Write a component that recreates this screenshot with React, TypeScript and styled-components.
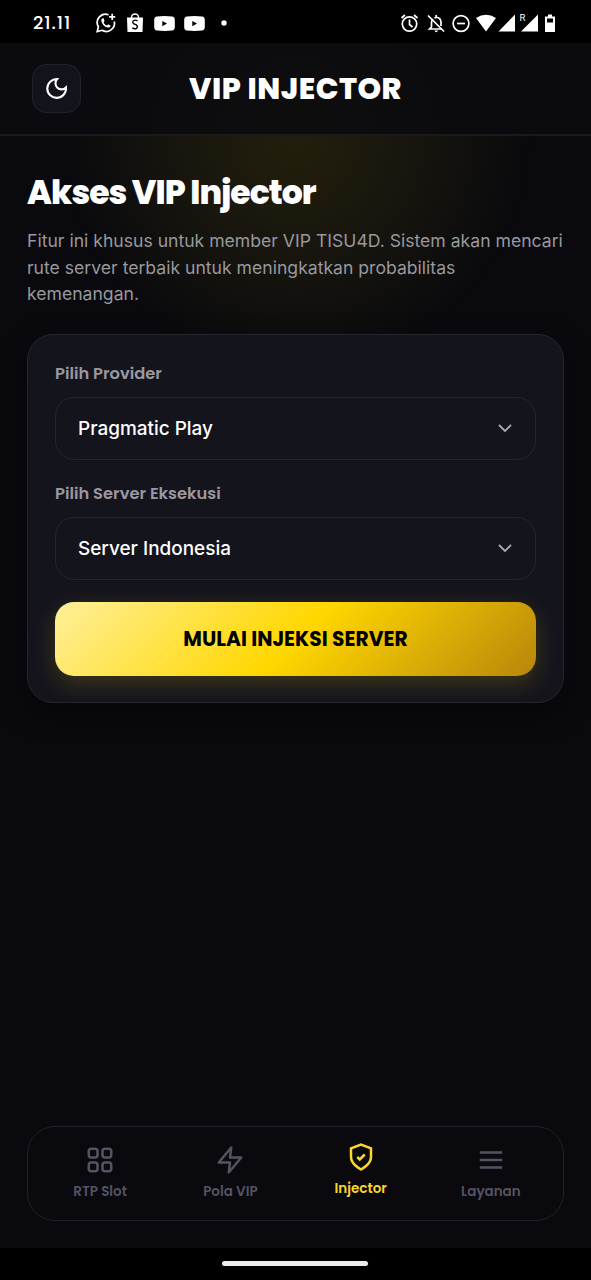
import React from 'react';
import styled, { createGlobalStyle, css } from 'styled-components';

const display = "'Poppins', 'Inter', 'Liberation Sans', sans-serif";

const GlobalStyle = createGlobalStyle`
  * { box-sizing: border-box; }
  body {
    margin: 0;
    background: #09090e;
    color: #fff;
    font-family: 'Inter', 'Liberation Sans', sans-serif;
  }
`;

const Screen = styled.div`
  width: 591px;
  height: 1280px;
  display: flex;
  flex-direction: column;
  overflow: hidden;
  background: radial-gradient(circle 236px at 295px 137px, #231f0c 0%, #1c190d 32%, #12110d 68%, #09090e 100%) #09090e;
`;

const StatusBar = styled.div`
  height: 43px;
  flex: none;
  display: flex;
  align-items: center;
  justify-content: space-between;
  padding: 3px 35px 0 33px;
  background: #000;
`;

const StatusGroup = styled.div`
  display: flex;
  align-items: center;
  gap: 9px;
`;

const Clock = styled.span`
  width: 54px;
  font: 500 18px/20px ${display};
  letter-spacing: 0.9px;
`;

const Header = styled.header`
  height: 93px;
  flex: none;
  display: grid;
  grid-template-columns: 49px 1fr 49px;
  align-items: center;
  padding: 0 32px;
  background: rgba(10, 10, 15, 0.86);
  border-bottom: 2px solid #1a1a1e;
`;

const ThemeButton = styled.button`
  width: 49px;
  height: 49px;
  display: grid;
  place-items: center;
  padding: 0;
  color: #fff;
  background: #13131c;
  border: 1px solid #22222a;
  border-radius: 14px;
`;

const Brand = styled.div`
  text-align: center;
  font: 800 30px/40px ${display};
  letter-spacing: 0.5px;
  white-space: nowrap;
`;

const Main = styled.main`
  flex: 1;
  padding: 35px 27px 0;
`;

const Title = styled.h1`
  margin: 0;
  font: 800 33px/44px ${display};
  letter-spacing: -0.93px;
`;

const Intro = styled.p`
  margin: 13px 0 0;
  font-size: 17.6px;
  line-height: 26.6px;
  color: #98989d;
  white-space: nowrap;
`;

const Card = styled.section`
  height: 369px;
  margin-top: 26px;
  padding: 26px 27px;
  background: #14141d;
  border: 1px solid #25252d;
  border-radius: 26px;
  box-shadow: 0 10px 30px rgba(0, 0, 0, 0.3);
`;

const Field = styled.div`
  display: flex;
  flex-direction: column;
  gap: 11px;
  margin-bottom: 21px;

  &:last-of-type {
    margin-bottom: 22px;
  }
`;

const Label = styled.label`
  font: 600 16.3px/25px ${display};
  color: #9998a1;
`;

const Select = styled.div`
  height: 63px;
  display: flex;
  align-items: center;
  justify-content: space-between;
  padding: 0 22px;
  font-size: 18.95px;
  font-weight: 500;
  border: 1px solid #25252d;
  border-radius: 19px;
`;

const Submit = styled.button`
  display: block;
  width: 100%;
  height: 74px;
  padding: 0;
  border: 0;
  border-radius: 19px;
  color: #000;
  font: 700 20.3px/30px ${display};
  background: linear-gradient(135deg, #fff09a 0%, #ffd700 50%, #b8860b 100%);
  box-shadow: 0 8px 24px rgba(255, 215, 0, 0.18);
`;

const Nav = styled.nav`
  height: 95px;
  flex: none;
  display: grid;
  grid-template-columns: repeat(4, 1fr);
  margin: 0 27px 27px;
  padding: 0 7px;
  border: 1px solid #212127;
  border-radius: 28px;
`;

const NavItem = styled.div<{ $active?: boolean }>`
  display: flex;
  flex-direction: column;
  align-items: center;
  gap: 7px;
  padding-top: 18px;
  color: #555361;
  font: 600 13.5px/20px ${display};
  ${(p) =>
    p.$active &&
    css`
      padding-top: 15px;
      color: #fbd72b;
    `}
`;

const GestureBar = styled.div`
  height: 32px;
  flex: none;
  display: grid;
  place-items: center;
  padding: 0 1px 1px 0;
  background: #000;
`;

const Handle = styled.div`
  width: 146px;
  height: 5px;
  border-radius: 3px;
  background: #ececec;
`;

const Glyph = ({ size = 30, children }: { size?: number; children: React.ReactNode }) => (
  <svg width={size} height={size} viewBox="0 0 24 24" fill="none" stroke="currentColor" strokeWidth={2}>
    {children}
  </svg>
);

const Chevron = () => (
  <svg width="16" height="10" viewBox="0 0 16 10" fill="none" stroke="#aaaab2" strokeWidth="1.8">
    <path d="M2 2l6 6 6-6" />
  </svg>
);

const YouTube = () => (
  <svg width="21" height="15" viewBox="0 0 21 15">
    <path
      fill="#fff"
      fillRule="evenodd"
      d="M3 .5Q10.5-.4 18 .5Q20.7.8 20.8 4V11Q20.7 14.2 18 14.5Q10.500 15.4 3 14.5Q.3 14.2.2 11V4Q.3.8 3 .5ZM8.300 5V10.200L13 7.600Z"
    />
  </svg>
);

export default function App() {
  return (
    <>
      <GlobalStyle />
      <Screen>
        <StatusBar>
          <StatusGroup>
            <Clock>21.11</Clock>
            <svg width="20" height="20" viewBox="0 0 20 20" fill="none" stroke="#fff" strokeWidth="1.7">
              <path d="M12.500 1.700A8.300 8.300 0 0 0 2.400 13.700L1.200 18.600L6 17.300A8.300 8.300 0 0 0 18.300 8.500" />
              <path d="M16.200.8V7M13.100 3.900H19.300" />
              <path
                fill="#fff"
                stroke="none"
                d="M6.500 5.200Q5 6.100 5.300 7.900Q6.500 13 11.700 14.500Q14 14.800 14.700 12.700L12.200 11.300L10.900 12.600Q8.600 11.700 7.600 9.400L8.500 7.900L7.600 5.300Z"
              />
            </svg>
            <svg width="20" height="20" viewBox="0 0 20 20">
              <path d="M6.500 5V4Q7 1 10 1T13.500 4V5" fill="none" stroke="#fff" strokeWidth="1.3" />
              <path d="M2 4.500H18L17.500 19H2.500Z" fill="#fff" />
              <path
                d="M12.500 7.800Q10.500 6.600 8.800 7.500Q6.900 9 8.500 10.600L11.300 11.900Q13.300 13.400 11.600 15.300Q9.700 16.500 7.300 14.900"
                fill="none"
                stroke="#000"
                strokeWidth="1.4"
              />
            </svg>
            <YouTube />
            <YouTube />
            <svg width="29" height="6" viewBox="0 0 29 6">
              <circle cx="10" cy="3" r="2.7" fill="#fff" />
            </svg>
          </StatusGroup>
          <svg width="156" height="20" viewBox="0 0 156 20" fill="none" stroke="#fff" strokeWidth="1.7">
            <circle cx="9.500" cy="11" r="7.200" />
            <path d="M9.500 6.500V11.500L12.500 14M1.500 5L5 2M14 2L17.500 5" />
            <path d="M32.500 16H42M32.500 16H29.500L31.500 14V9.500Q31.500 7.500 33 6M34.500 5Q36 4 37.500 4.500Q41 5.500 41 9.500V13M36.200 2V4.500" />
            <path d="M28 2.500L44 18.500" />
            <path d="M34.500 17.500H38Q37.500 19.300 36.200 19.300T34.500 17.500Z" fill="#fff" stroke="none" />
            <circle cx="61" cy="10.500" r="7.900" />
            <path d="M57 10.500H65" />
            <path
              fill="#fff"
              stroke="none"
              d="M76 5Q86 -1.500 96 5L86 18.500ZM115 1.500V18.500H98.500ZM138 1.500V18.500H121V18.500ZM148 1.500H152V3.500H155V19H145V3.500H148Z"
            />
            <path fill="#000" stroke="none" d="M119 0H127V10H119ZM147 5.500H153V9.500H147Z" />
            <text x="119.500" y="8" fill="#fff" stroke="none" fontFamily="Roboto, sans-serif" fontSize="9.5">
              R
            </text>
          </svg>
        </StatusBar>
        <Header>
          <ThemeButton aria-label="Tema">
            <Glyph size={25}>
              <path d="M12.600 3a5.800 5.800 0 0 0 8.500 8A9 9 0 1 1 12.600 3Z" />
            </Glyph>
          </ThemeButton>
          <Brand>VIP INJECTOR</Brand>
        </Header>
        <Main>
          <Title>Akses VIP Injector</Title>
          <Intro>
            Fitur ini khusus untuk member VIP TISU4D. Sistem akan mencari
            <br />
            rute server terbaik untuk meningkatkan probabilitas
            <br />
            kemenangan.
          </Intro>
          <Card>
            <Field>
              <Label>Pilih Provider</Label>
              <Select>
                Pragmatic Play
                <Chevron />
              </Select>
            </Field>
            <Field>
              <Label>Pilih Server Eksekusi</Label>
              <Select>
                Server Indonesia
                <Chevron />
              </Select>
            </Field>
            <Submit>MULAI INJEKSI SERVER</Submit>
          </Card>
        </Main>
        <Nav>
          <NavItem>
            <Glyph>
              <rect x="3" y="3" width="7" height="7" rx="2" />
              <rect x="14" y="3" width="7" height="7" rx="2" />
              <rect x="3" y="14" width="7" height="7" rx="2" />
              <rect x="14" y="14" width="7" height="7" rx="2" />
            </Glyph>
            RTP Slot
          </NavItem>
          <NavItem>
            <Glyph>
              <path d="M13 2L3 14h9l-1 8 10-12h-9l1-8z" strokeLinejoin="round" />
            </Glyph>
            Pola VIP
          </NavItem>
          <NavItem $active>
            <Glyph>
              <path d="M12 22s8-4 8-10V5l-8-3-8 3v7c0 6 8 10 8 10z" />
              <path d="M9 12l2 2 4-4" />
            </Glyph>
            Injector
          </NavItem>
          <NavItem>
            <Glyph>
              <path d="M3 6h18M3 12h18M3 18h18" />
            </Glyph>
            Layanan
          </NavItem>
        </Nav>
        <GestureBar>
          <Handle />
        </GestureBar>
      </Screen>
    </>
  );
}
